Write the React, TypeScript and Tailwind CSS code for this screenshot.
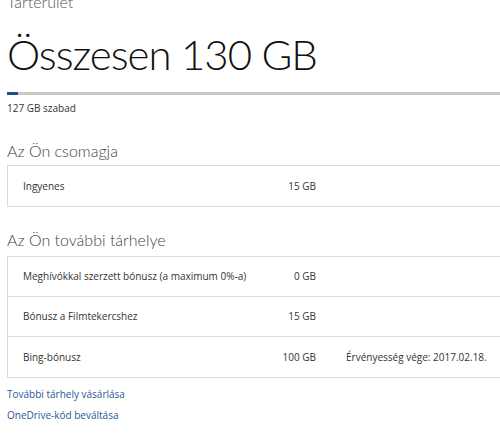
import React from 'react';

const rows = [
  { label: 'Meghívókkal szerzett bónusz (a maximum 0%-a)', value: '0 GB', note: '' },
  { label: 'Bónusz a Filmtekercshez', value: '15 GB', note: '' },
  { label: 'Bing-bónusz', value: '100 GB', note: 'Érvényesség vége: 2017.02.18.' },
];

export default function App() {
  return (
    <div className="w-[500px] h-[433px] overflow-hidden bg-white text-[#333] font-['Open_Sans','Noto_Sans',sans-serif]">
      <div className="pl-[7px]">
        {/* Title */}
        <div className="-mt-[9px] h-[22px] text-[16px] leading-[22px] text-[#555] font-light font-['Lato','Open_Sans',sans-serif]">Tárterület</div>
        <h1 className="mt-[13px] h-[56px] text-[42px] leading-[56px] font-light text-[#111] font-['Lato','Open_Sans',sans-serif] tracking-[-1px]">
          Összesen 130 GB
        </h1>

        {/* Usage bar */}
        <div className="mt-[10px] h-[3px] w-[600px] bg-[#c9c9c9] flex">
          <div className="h-full w-[11px] bg-[#1e4f8f]" />
        </div>
        <div className="mt-[6px] text-[10px] leading-[14px] text-[#333]">127 GB szabad</div>

        {/* Plan */}
        <h2 className="mt-[25px] text-[16px] leading-[22px] text-[#444] font-light font-['Lato','Open_Sans',sans-serif]">Az Ön csomagja</h2>
        <div className="mt-[3px] w-[600px] border border-[#d9d9d9]">
          <Row label="Ingyenes" value="15 GB" note="" />
        </div>

        {/* Extra storage */}
        <h2 className="mt-[22px] text-[16px] leading-[22px] text-[#444] font-light font-['Lato','Open_Sans',sans-serif]">Az Ön további tárhelye</h2>
        <div className="mt-[5px] w-[600px] border border-[#d9d9d9] divide-y divide-[#d9d9d9]">
          {rows.map((r) => (
            <Row key={r.label} {...r} />
          ))}
        </div>

        {/* Links */}
        <div className="mt-[9px] flex flex-col gap-[7px] text-[10px] leading-[14px] text-[#2b5797]">
          <a href="#">További tárhely vásárlása</a>
          <a href="#">OneDrive-kód beváltása</a>
        </div>
      </div>
    </div>
  );
}

function Row({ label, value, note }: { label: string; value: string; note: string }) {
  return (
    <div className="h-[40px] flex items-center text-[10px] text-[#333]">
      <div className="w-[248px] pl-[15px] shrink-0">{label}</div>
      <div className="w-[60px] text-right shrink-0">{value}</div>
      <div className="pl-[30px]">{note}</div>
    </div>
  );
}
